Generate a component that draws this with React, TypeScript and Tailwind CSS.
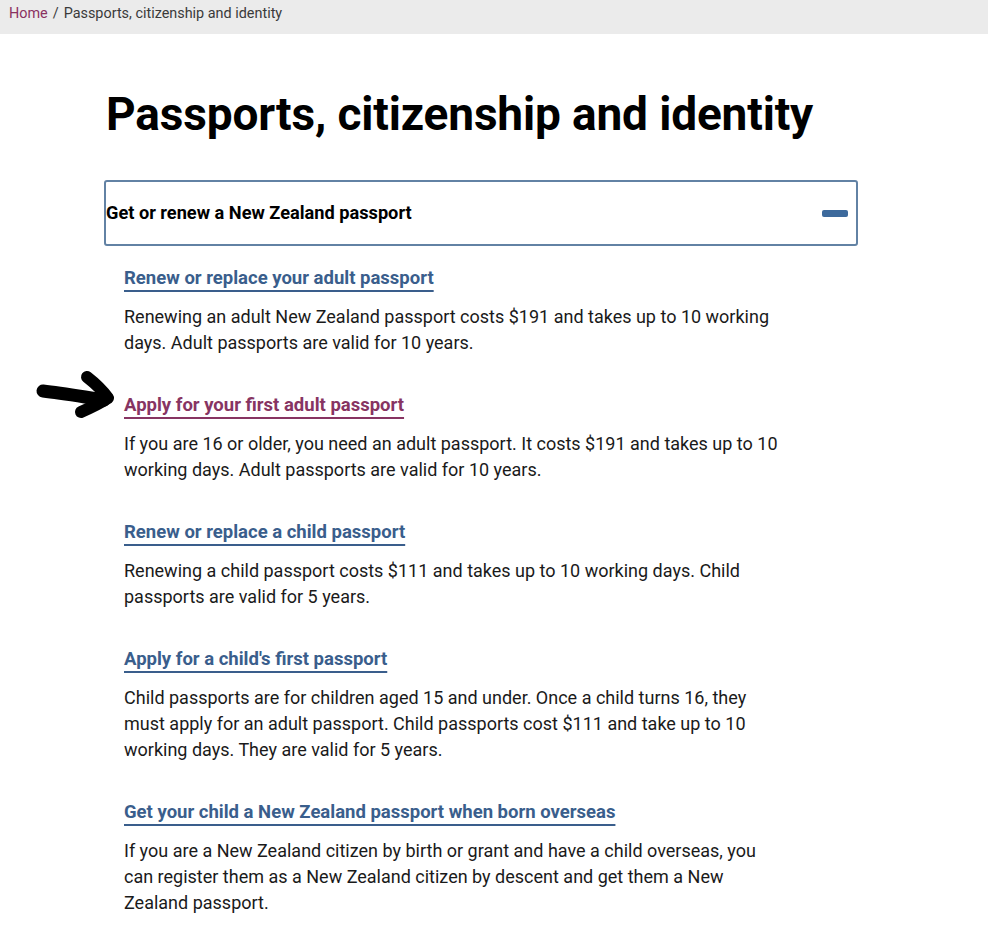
import React from "react";

type Item = { title: string; body: string; visited?: boolean };

const items: Item[] = [
  {
    title: "Renew or replace your adult passport",
    body: "Renewing an adult New Zealand passport costs $191 and takes up to 10 working days. Adult passports are valid for 10 years.",
  },
  {
    title: "Apply for your first adult passport",
    body: "If you are 16 or older, you need an adult passport. It costs $191 and takes up to 10 working days. Adult passports are valid for 10 years.",
    visited: true,
  },
  {
    title: "Renew or replace a child passport",
    body: "Renewing a child passport costs $111 and takes up to 10 working days. Child passports are valid for 5 years.",
  },
  {
    title: "Apply for a child's first passport",
    body: "Child passports are for children aged 15 and under. Once a child turns 16, they must apply for an adult passport. Child passports cost $111 and take up to 10 working days. They are valid for 5 years.",
  },
  {
    title: "Get your child a New Zealand passport when born overseas",
    body: "If you are a New Zealand citizen by birth or grant and have a child overseas, you can register them as a New Zealand citizen by descent and get them a New Zealand passport.",
  },
];

// hand-drawn annotation arrow pointing at the visited link
const Arrow = () => (
  <svg
    className="absolute left-[-92px] top-[-26px]"
    width="86"
    height="56"
    viewBox="0 0 86 56"
    fill="none"
  >
    <path
      d="M11 25 C 30 27, 52 31, 72 34"
      stroke="#000"
      strokeWidth="13"
      strokeLinecap="round"
    />
    <path
      d="M55 11 C 64 18, 71 25, 76 32 C 67 38, 58 42, 49 46"
      stroke="#000"
      strokeWidth="12"
      strokeLinecap="round"
      strokeLinejoin="round"
    />
  </svg>
);

export default function App() {
  return (
    <div className="min-h-screen bg-white text-[#1f1f1f] font-['Roboto',sans-serif]">
      <div className="h-[34px] bg-[#ebebeb] flex items-start pt-[3px] px-[9px] text-[14.4px] text-[#3a3a3a]">
        <a className="text-[#8a3160]" href="#">
          Home
        </a>
        <span className="mx-[5px]">/</span>
        <span>Passports, citizenship and identity</span>
      </div>

      <div className="ml-[104px] w-[754px] pb-10">
        <h1 className="pl-[2px] pt-[50px] text-[46px] leading-[60px] font-bold tracking-[-0.15px] text-black">
          Passports, citizenship and identity
        </h1>

        <div className="mt-[36px] h-[66px] border-2 border-[#6282a4] rounded-[3px] flex items-center justify-between">
          <span className="text-[18.2px] font-bold text-black">
            Get or renew a New Zealand passport
          </span>
          <span className="w-[26px] h-[7px] rounded-[2px] bg-[#3d6a9c] mr-[8px]" />
        </div>

        <div className="pl-[20px] pt-[19px] w-[680px]">
          {items.map((it) => (
            <div key={it.title} className="mb-[36px]">
              <div className="relative leading-[26px]">
                {it.visited && <Arrow />}
                <a
                  href="#"
                  className={`text-[18.5px] font-bold underline decoration-[1.5px] underline-offset-[6px] ${
                    it.visited ? "text-[#873462]" : "text-[#3a5e8c]"
                  }`}
                >
                  {it.title}
                </a>
              </div>
              <p className="mt-[12px] text-[18px] leading-[26px] text-[#1a1a1a]">{it.body}</p>
            </div>
          ))}
        </div>
      </div>
    </div>
  );
}
